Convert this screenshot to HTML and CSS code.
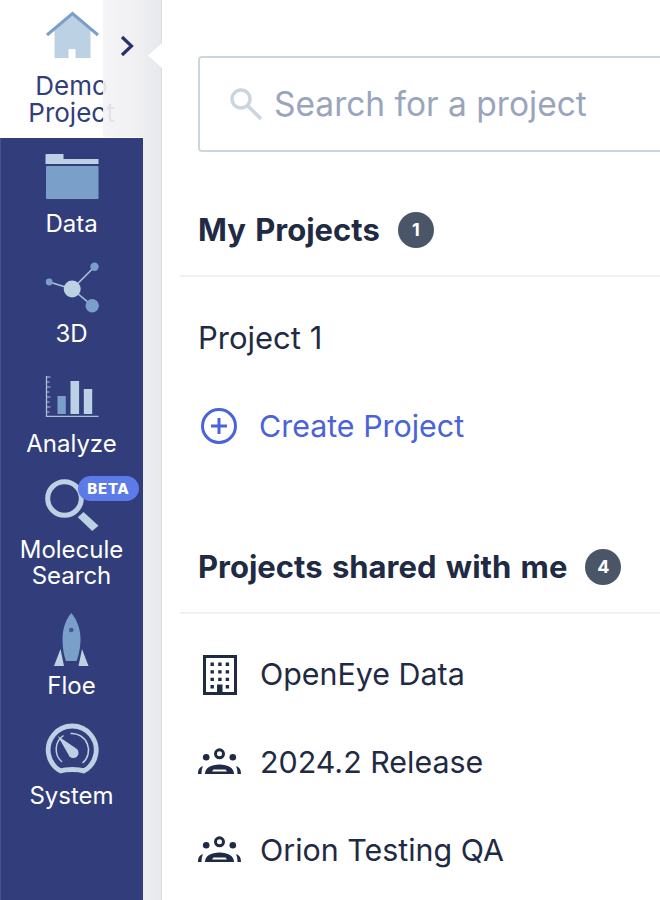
FILE: index.html
```html
<!DOCTYPE html>
<html lang="en">
<head>
    <meta charset="UTF-8">
    <meta name="viewport" content="width=device-width, initial-scale=1.0">
    <title>Projects</title>
    <link rel="stylesheet" href="styles.css">
</head>
<body>
    <div class="page">
        <nav class="sidebar">
            <div class="current">
                <svg class="nav-icon" viewBox="41.5 8 60 60">
                    <path d="M54 30 72 15 90 30V58H75V49H68V58H54Z" fill="#bcd1e4"/>
                    <path d="M46.5 35 72 13.5 97.500 35" fill="none" stroke="#7ba0c8" stroke-width="3"/>
                </svg>
                <div class="nav-label">Demo Project</div>
            </div>
            <div class="collapse">
                <svg class="chevron" viewBox="0 0 14 22">
                    <path d="M2 2 11.500 11 2 20" fill="none" stroke="#27336f" stroke-width="3.200"/>
                </svg>
            </div>
            <ul class="nav-list">
                <li class="nav-item">
                    <svg class="nav-icon" viewBox="41.5 150 60 60">
                        <path d="M45 155a1 1 0 0 1 1-1H63v5H98v5H45Z" fill="#bcd1e4"/>
                        <rect x="45.500" y="166" width="52.500" height="33" rx="1" fill="#7a9fc8"/>
                    </svg>
                    <div class="nav-label">Data</div>
                </li>
                <li class="nav-item">
                    <svg class="nav-icon" viewBox="41.5 260 60 60">
                        <path d="M48.700 282 71.700 289 94 266.700M71.700 289 91.700 305.700" stroke="#a9c0da" stroke-width="1.600" fill="none"/>
                        <circle cx="71.700" cy="289" r="8.500" fill="#bcd1e4"/>
                        <circle cx="94" cy="266.700" r="4.200" fill="#7a9fc8"/>
                        <circle cx="91.700" cy="305.700" r="6.700" fill="#7a9fc8"/>
                        <circle cx="48.700" cy="282" r="3.400" fill="#7a9fc8"/>
                    </svg>
                    <div class="nav-label">3D</div>
                </li>
                <li class="nav-item">
                    <svg class="nav-icon" viewBox="41.5 370 60 60">
                        <path d="M46 376V416.300H98" fill="none" stroke="#a9c0da" stroke-width="1.300"/>
                        <path d="M46 377H50M46 382H49M46 387H50M46 392H49M46 397H50M46 402H49M46 407H50M46 412H49" stroke="#a9c0da" stroke-width="1"/>
                        <rect x="57" y="396" width="8.300" height="18" fill="#7a9fc8"/>
                        <rect x="70" y="381" width="8.600" height="33" fill="#bcd1e4"/>
                        <rect x="83.300" y="389" width="8.400" height="25" fill="#bcd1e4"/>
                    </svg>
                    <div class="nav-label">Analyze</div>
                </li>
                <li class="nav-item nav-item-beta">
                    <svg class="nav-icon" viewBox="41.5 476 60 60">
                        <circle cx="64" cy="498.500" r="16.800" fill="none" stroke="#bcd1e4" stroke-width="5"/>
                        <path d="M83 512 98 525.700 91.700 531 77.300 517.300Z" fill="#bcd1e4"/>
                    </svg>
                    <span class="beta">BETA</span>
                    <div class="nav-label">Molecule Search</div>
                </li>
                <li class="nav-item">
                    <svg class="nav-icon" viewBox="41.5 612 60 60">
                        <path d="M53.500 666 60 649 63.500 666ZM88 666 81.500 649 78 666Z" fill="#bcd1e4"/>
                        <path d="M70.800 613C75 618 80 627 80 639 80 648 78 656 76 661H65.500C63.500 656 62 648 62 639 62 627 66.500 618 70.800 613Z" fill="#7a9fc8"/>
                        <circle cx="70.800" cy="630" r="2.300" fill="#3d5a9a"/>
                    </svg>
                    <div class="nav-label">Floe</div>
                </li>
                <li class="nav-item">
                    <svg class="nav-icon" viewBox="41.5 722 60 60">
                        <path d="M60.100 771A24 24 0 1 1 83.300 771C78 769 65.500 769 60.100 771Z" fill="none" stroke="#bcd1e4" stroke-width="4.800" stroke-linejoin="round"/>
                        <path d="M61.500 762A16.700 16.700 0 0 1 63 735.500M70 733.500A16.700 16.700 0 0 1 82 763" fill="none" stroke="#bcd1e4" stroke-width="1.500"/>
                        <path d="M57.300 736 76.500 749A5.200 5.200 0 0 1 69 756.500Z" fill="#bcd1e4"/>
                    </svg>
                    <div class="nav-label">System</div>
                </li>
            </ul>
        </nav>

        <div class="divider-strip">
            <div class="notch"></div>
        </div>

        <main class="content">
            <div class="search-box">
                <svg class="search-icon" viewBox="0 0 34 34">
                    <circle cx="12" cy="12" r="9" fill="none" stroke="#cbd5e0" stroke-width="3.500"/>
                    <path d="M19 19 32 32" stroke="#cbd5e0" stroke-width="3.500"/>
                </svg>
                <span class="search-text">Search for a project</span>
            </div>

            <section>
                <header class="section-head">
                    <h2>My Projects</h2>
                    <span class="count">1</span>
                </header>
                <ul class="rows">
                    <li class="row row-plain">Project 1</li>
                    <li class="row row-create">
                        <svg class="plus" viewBox="0 0 38 38">
                            <circle cx="19" cy="19" r="16.500" fill="none" stroke="#4a63d8" stroke-width="3"/>
                            <path d="M19 11V27M11 19H27" stroke="#4a63d8" stroke-width="3"/>
                        </svg>
                        Create Project
                    </li>
                </ul>
            </section>

            <section class="shared">
                <header class="section-head">
                    <h2>Projects shared with me</h2>
                    <span class="count">4</span>
                </header>
                <ul class="rows">
                    <li class="row">
                        <span class="row-icon">
                            <svg class="building" width="34" height="40" viewBox="0 0 34 40">
                                <rect x="1.500" y="1.500" width="31" height="37" fill="none" stroke="#1f2a44" stroke-width="3"/>
                                <path d="M7.500 7.500h3.400v3.400H7.500zM15.200 7.500h3.400v3.400h-3.400zM22.700 7.500h3.400v3.400h-3.400zM7.500 15.200h3.400v3.400H7.500zM15.200 15.200h3.400v3.400h-3.400zM22.700 15.200h3.400v3.400h-3.400zM7.500 22.700h3.400v3.400H7.500zM15.200 22.700h3.400v3.400h-3.400zM22.700 22.700h3.400v3.400h-3.400zM7.500 30h3.400v3.400H7.500zM22.700 30h3.400v3.400h-3.400zM14 29.500h5.500V40H14z" fill="#1f2a44"/>
                            </svg>
                        </span>
                        OpenEye Data
                    </li>
                    <li class="row">
                        <span class="row-icon">
                            <svg width="44" height="28" viewBox="0 0 44 28">
                                <circle cx="21.500" cy="5.800" r="4" fill="none" stroke="#1f2a44" stroke-width="3"/>
                                <circle cx="8.200" cy="9.300" r="3.300" fill="#1f2a44"/>
                                <circle cx="34.800" cy="9.300" r="3.300" fill="#1f2a44"/>
                                <path d="M7 26C7 20 13 16.500 21.500 16.500S36 20 36 26ZM15.500 21.500H27.500L29 23.500H14Z" fill="#1f2a44" fill-rule="evenodd"/>
                                <path d="M0 26C0 21 2 19 5 18 4 20 3.500 23 3.500 26ZM43 26C43 21 41 19 38 18 39 20 39.500 23 39.500 26Z" fill="#1f2a44"/>
                            </svg>
                        </span>
                        2024.2 Release
                    </li>
                    <li class="row">
                        <span class="row-icon">
                            <svg width="44" height="28" viewBox="0 0 44 28">
                                <circle cx="21.500" cy="5.800" r="4" fill="none" stroke="#1f2a44" stroke-width="3"/>
                                <circle cx="8.200" cy="9.300" r="3.300" fill="#1f2a44"/>
                                <circle cx="34.800" cy="9.300" r="3.300" fill="#1f2a44"/>
                                <path d="M7 26C7 20 13 16.500 21.500 16.500S36 20 36 26ZM15.500 21.500H27.500L29 23.500H14Z" fill="#1f2a44" fill-rule="evenodd"/>
                                <path d="M0 26C0 21 2 19 5 18 4 20 3.500 23 3.500 26ZM43 26C43 21 41 19 38 18 39 20 39.500 23 39.500 26Z" fill="#1f2a44"/>
                            </svg>
                        </span>
                        Orion Testing QA
                    </li>
                </ul>
            </section>
        </main>
    </div>
</body>
</html>
```

FILE: styles.css
```css
html, body {
    margin: 0;
    height: 100%;
    overflow: hidden;
}
body {
    font-family: Inter, "Liberation Sans", sans-serif;
    background-color: white;
    color: #1f2a44;
}
ul {
    list-style: none;
    margin: 0;
    padding: 0;
}
.page {
    display: flex;
    height: 900px;
}

/* left navigation */
.sidebar {
    position: relative;
    flex: 0 0 143px;
    background-color: #313e7b;
    border-left: 1px solid #46528c;
    box-sizing: border-box;
}
.current {
    height: 138px;
    margin-left: -1px;
    padding-top: 8px;
    box-sizing: border-box;
    background-color: white;
    color: #313e7b;
    text-align: center;
}
.collapse {
    position: absolute;
    top: 0;
    right: 0;
    width: 40px;
    height: 137px;
    background: linear-gradient(90deg, rgba(244, 244, 246, 0.9), rgba(238, 238, 240, 0.95));
}
.chevron {
    position: absolute;
    left: 17px;
    top: 35px;
    width: 14px;
    height: 22px;
}
.nav-icon {
    display: block;
    width: 60px;
    height: 60px;
    margin: 0 auto;
}
.current .nav-icon {
    margin-bottom: 4px;
}
.nav-label {
    font-size: 24px;
    line-height: 26px;
    padding: 1px 16px 0;
    margin-bottom: -1px;
    text-align: center;
}
.current .nav-label {
    font-size: 26px;
    line-height: 27px;
    padding-top: 0;
}
.nav-list {
    display: flex;
    flex-direction: column;
    gap: 24px;
    padding-top: 12px;
    color: white;
}
.nav-item {
    position: relative;
    margin-left: -1px;
}
.nav-item-beta {
    margin-top: -4px;
}
.beta {
    position: absolute;
    top: 0;
    left: 78px;
    width: 61px;
    height: 25px;
    border-radius: 13px;
    background-color: #5c7ae8;
    color: white;
    font-size: 15px;
    font-weight: 800;
    line-height: 25px;
    letter-spacing: 0.7px;
    text-align: center;
}

/* grey strip between nav and content */
.divider-strip {
    position: relative;
    flex: 0 0 19px;
    box-sizing: border-box;
    background: linear-gradient(90deg, #eceef0, #e6e8ec);
    border-right: 1px solid #dcdde0;
}
.notch {
    position: absolute;
    top: 43px;
    right: -1px;
    width: 14px;
    height: 25px;
    background-color: white;
    clip-path: polygon(100% 0, 0 50%, 100% 100%);
}

/* main column */
.content {
    flex: 1;
    min-width: 0;
    overflow: hidden;
    padding: 56px 0 0 18px;
}
.search-box {
    display: flex;
    align-items: center;
    width: 600px;
    height: 96px;
    margin-left: 18px;
    padding-left: 29px;
    box-sizing: border-box;
    border: 2px solid #cbd5e0;
    border-radius: 4px;
}
.search-icon {
    width: 34px;
    height: 34px;
    margin-right: 11px;
}
.search-text {
    font-size: 33.5px;
    color: #9aa5bd;
}
.section-head {
    display: flex;
    align-items: center;
    gap: 18px;
    height: 93px;
    margin-top: 32px;
    padding-left: 18px;
    box-sizing: border-box;
    border-bottom: 2px solid #edf2f7;
}
.section-head h2 {
    margin: 0;
    font-size: 31px;
    font-weight: 700;
    word-spacing: 2px;
}
.count {
    width: 36px;
    height: 36px;
    border-radius: 50%;
    background-color: #4a5568;
    color: white;
    font-size: 18px;
    font-weight: 700;
    line-height: 36px;
    text-align: center;
}
.shared {
    margin-top: 51px;
}
.shared .section-head {
    margin-top: 0;
}
.rows {
    padding-top: 17px;
}
.row {
    display: flex;
    align-items: center;
    height: 88px;
    padding-left: 18px;
    padding-bottom: 2px;
    box-sizing: border-box;
    font-size: 30.4px;
}
.row-plain {
    font-size: 31px;
}
.row-icon {
    display: flex;
    justify-content: center;
    align-items: center;
    flex: 0 0 44px;
    margin-right: 18px;
}
.building {
    margin-top: 1px;
}
.row-create {
    padding-bottom: 1px;
    color: #4a63d8;
}
.plus {
    width: 38px;
    height: 38px;
    margin: 1px 21px 0 2px;
}
```
